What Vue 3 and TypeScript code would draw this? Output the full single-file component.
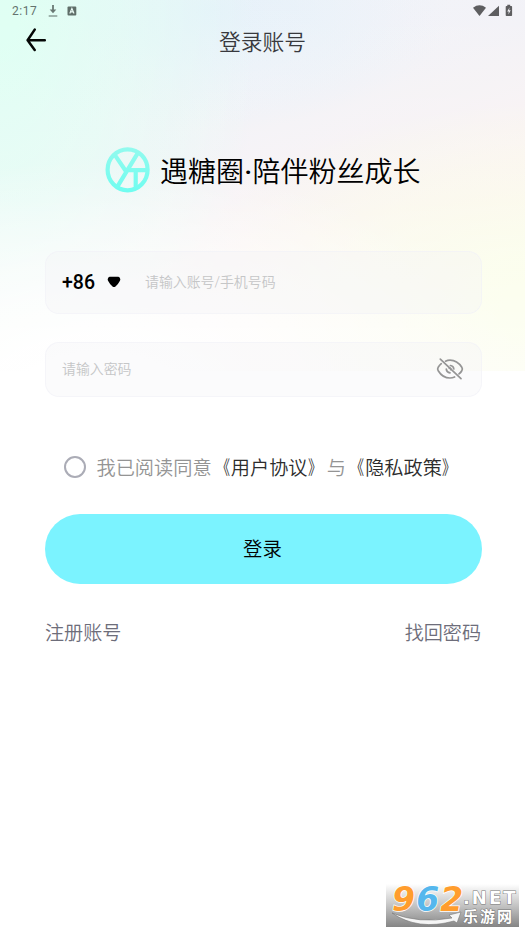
<script setup lang="ts">
import { ref } from 'vue'

const account = ref('')
const password = ref('')
const agreed = ref(false)
const masked = ref(true)
</script>

<template>
  <main class="screen">
    <div class="status">
      <span class="time">2:17</span>
      <svg class="download" width="10" height="14" viewBox="0 0 10 14">
        <path d="M5 1v6" stroke="#697873" stroke-width="1.8" />
        <path d="M1.7 5.6h6.6L5 9.2z" fill="#697873" />
        <path d="M.7 12h8.6" stroke="#697873" stroke-width="1.1" />
      </svg>
      <svg class="badge" width="10" height="10" viewBox="0 0 10 10">
        <rect x=".5" y=".5" width="8.8" height="9" rx="1" fill="#5f6e69" />
        <path d="M2.8 7.5 4.9 2.4 7 7.5M3.6 5.9h2.6" fill="none" stroke="#effffa" stroke-width="1.1" />
      </svg>
      <div class="signals">
        <svg width="40" height="14" viewBox="0 0 40 14">
          <path d="M0 3.7Q6.5-1 13 3.7L6.5 12z" fill="#5e5e60" />
          <path d="M26 1.7V12H15z" fill="#5e5e60" />
          <path d="M34.3.8h2.9v1.1h1.1q.8 0 .8.8v8.5q0 .8-.8.8h-4.8q-.8 0-.8-.8V2.7q0-.8.8-.8h.8z" fill="#5e5e60" />
          <path d="m36.5 3.4-2.3 4h1.6l-.4 3 2.3-4.1h-1.6z" fill="#f3f2f6" />
        </svg>
      </div>
    </div>

    <header class="header">
      <button class="back" type="button" aria-label="返回">
        <svg width="22" height="24" viewBox="0 0 22 24">
          <path d="M9.7 1.6 2.6 12.2l7.1 9.7M2.6 12.2h17.2" fill="none" stroke="#050706" stroke-width="2.5" stroke-linecap="round" stroke-linejoin="round" />
        </svg>
      </button>
      <h1>登录账号</h1>
    </header>

    <section class="brand">
      <svg width="46" height="48" viewBox="0 0 46 48">
        <defs>
          <linearGradient id="ring" gradientUnits="userSpaceOnUse" x1="0" y1="2" x2="0" y2="46">
            <stop offset="0" stop-color="#92faee" />
            <stop offset="1" stop-color="#70fdf0" />
          </linearGradient>
        </defs>
        <g fill="none" stroke="url(#ring)" stroke-width="4.2">
          <ellipse cx="22.6" cy="23.8" rx="20" ry="20.5" />
          <path d="M9.6 8.6 20.8 25M32.6 7.3 12.4 40.7M23 24.1h19M30.7 24.8v16.6" />
        </g>
      </svg>
      <span>遇糖圈<i>·</i>陪伴粉丝成长</span>
    </section>

    <form class="form" @submit.prevent>
      <div class="field account">
        <button class="region" type="button">
          <span>+86</span>
          <svg width="14" height="12" viewBox="0 0 14 12">
            <path d="M3 .8h8q1.3 0 2 1.4.8 1.5-.2 2.8-1.5 3.1-4.3 5.5-1.5 1.1-3 0Q2.7 8.1 1.2 5 .2 3.7 1 2.2 1.7.8 3 .8z" fill="#000" />
          </svg>
        </button>
        <input v-model="account" type="text" placeholder="请输入账号/手机号码" />
      </div>
      <div class="field password">
        <input v-model="password" :type="masked ? 'password' : 'text'" placeholder="请输入密码" />
        <button class="eye" type="button" aria-label="密码可见性" @click="masked = !masked">
          <svg width="28" height="24" viewBox="0 0 28 24" fill="none" stroke="#959595" stroke-width="1.7" stroke-linecap="round">
            <path d="M9.5 4.200Q11.600 3.100 14 3.100c4.400 0 9.200 3.100 11.800 7.200q1.100 1.700 0 3.400-1.100 1.900-2.800 3.200M18.600 20Q16.400 21 14 21C9.600 21 4.800 18 2.200 13.700q-1.100-1.700 0-3.400Q3.500 8.200 5.300 6.700" />
            <path d="M14.400 8.500q3.100.4 3.400 3.500M10.300 12.200q.3 3.300 3.700 3.700M4.300 2.200 25 21.700" />
            <path d="M13.200 11.100q1.700-.5 1.500 1.500" />
          </svg>
        </button>
      </div>

      <label class="agreement">
        <input v-model="agreed" type="checkbox" />
        <span>我已阅读同意<b><i class="open">《</i>用户协议<i class="close">》</i></b>与<b><i class="open">《</i>隐私政策<i class="close">》</i></b></span>
      </label>

      <button class="submit" type="submit">登录</button>
      <nav class="links">
        <a>注册账号</a>
        <a>找回密码</a>
      </nav>
    </form>

    <aside class="watermark">
      <svg class="swoosh" width="133" height="43" viewBox="0 0 133 43">
        <path d="M6 29Q32 40 66 34l-3-3 12-3-4 11-3-2Q32 47 6 29z" fill="#f5f5f5" stroke="#777" stroke-width=".6" />
      </svg>
      <span class="digits">9<em>6</em>2</span>
      <div class="words">
        <span class="net">.NET</span>
        <span class="site">乐游网</span>
      </div>
    </aside>
  </main>
</template>

<style>
body {
  background: #fff;
}
</style>

<style scoped>
.screen {
  position: relative;
  box-sizing: border-box;
  width: 525px;
  height: 933px;
  overflow: hidden;
  font-family: Roboto, 'Noto Sans CJK SC', sans-serif;
  font-weight: 350;
  background:
    linear-gradient(180deg, rgba(255, 255, 255, 0.1) 0, rgba(255, 255, 255, 0.2) 200px, rgba(255, 255, 255, 0.6) 371px) 0 0 / 100% 371px no-repeat,
    radial-gradient(ellipse 430px 240px at 100px 400px, #fff 20%, rgba(255, 255, 255, 0) 100%) 0 0 / 100% 371px no-repeat,
    radial-gradient(ellipse 360px 200px at 540px 300px, #fafee4 10%, rgba(250, 254, 228, 0) 100%) 0 0 / 100% 371px no-repeat,
    radial-gradient(ellipse 260px 520px at 0 0, #dcfff2 8%, rgba(228, 255, 247, 0) 100%) 0 0 / 100% 371px no-repeat,
    radial-gradient(ellipse 240px 120px at 210px 10px, #e3f0f9 0, rgba(227, 240, 249, 0) 100%) 0 0 / 100% 371px no-repeat,
    linear-gradient(160deg, #eff5fa 0, #f2f1f6 38%, #faf1f1 62%, #fcf7f0 100%) 0 0 / 100% 371px no-repeat,
    #fff;
}

button {
  padding: 0;
  border: 0;
  background: none;
  font: inherit;
  color: inherit;
}

svg {
  display: block;
  flex: none;
}

.status {
  display: flex;
  align-items: center;
  height: 21px;
  padding: 0 12px;
}

.time {
  width: 36px;
  color: #64736e;
  font-size: 12px;
  font-weight: 400;
  letter-spacing: 0.5px;
}

.badge {
  margin-left: 9px;
}

.signals {
  margin-left: auto;
}

.header {
  display: grid;
  grid-template-columns: 60px 1fr 60px;
  align-items: center;
  height: 41px;
}

.back {
  padding: 0 0 4px 24.5px;
}

h1 {
  margin: 0;
  padding-top: 2px;
  color: #38393d;
  font-size: 21.8px;
  font-weight: 350;
  line-height: 40px;
  text-align: center;
}

.brand {
  display: flex;
  align-items: center;
  gap: 9px;
  height: 48px;
  margin-top: 84px;
  padding-left: 105px;
  color: #000;
  font-size: 28px;
}

.brand i {
  display: inline-block;
  width: 8.5px;
  font-style: normal;
  font-weight: 500;
  text-align: center;
}

.form {
  display: flex;
  flex-direction: column;
  margin: 57px 43px 0 45px;
}

.field {
  box-sizing: border-box;
  display: flex;
  align-items: center;
  width: 437px;
  padding: 0 17px 2px 16px;
  border: 1px solid rgba(240, 240, 246, 0.6);
  border-radius: 14px;
  background: rgba(242, 243, 247, 0.32);
}

.account {
  height: 63px;
}

.password {
  height: 55px;
  margin-top: 28px;
}

.region {
  display: flex;
  align-items: center;
  gap: 12px;
  width: 83px;
  padding-top: 1px;
  color: #000;
  font-size: 19.5px;
  font-weight: 500;
}

.field input {
  flex: 1;
  min-width: 0;
  padding: 0;
  border: 0;
  outline: 0;
  background: transparent;
  font: 350 13.9px Roboto, 'Noto Sans CJK SC', sans-serif;
}

.field input::placeholder {
  color: #c5c6c7;
  opacity: 1;
}

.agreement {
  display: flex;
  align-items: center;
  gap: 10.5px;
  height: 30px;
  margin-top: 55px;
  padding-left: 19px;
  color: #949494;
  font-size: 19.2px;
  white-space: nowrap;
}

.agreement input {
  box-sizing: border-box;
  width: 22px;
  height: 22px;
  margin: 0;
  border: 2px solid #abacb6;
  border-radius: 50%;
  appearance: none;
}

.agreement input:checked {
  background: #7bf3ff;
}

.agreement b {
  color: #2c2c2c;
  font-weight: 350;
}

.agreement i {
  display: inline-block;
  font-style: normal;
}

.open {
  transform: translateX(-1px) scaleX(0.72);
  transform-origin: right;
}

.close {
  transform: scaleX(0.72);
  transform-origin: left;
}

.submit {
  height: 70px;
  margin-top: 32px;
  padding: 0 2px 3px 0;
  border-radius: 35px;
  background: #7bf3ff;
  color: #000;
  font-size: 19.4px;
}

.links {
  display: flex;
  justify-content: space-between;
  margin-top: 35px;
  padding-right: 1px;
  color: #6d6d7a;
  font-size: 19.1px;
  line-height: 30px;
}

.watermark {
  position: absolute;
  right: 6px;
  bottom: 6px;
  display: flex;
  width: 133px;
  height: 43px;
  background: linear-gradient(#fff, #c4c4c4 50%, #858585);
  color: #fff;
  white-space: nowrap;
}

.swoosh {
  position: absolute;
  left: 0;
  top: 0;
}

.digits {
  position: relative;
  width: 71px;
  padding-left: 6px;
  color: #ff9d2e;
  font: italic 700 33px/31px 'DejaVu Sans', sans-serif;
  letter-spacing: 1.2px;
  -webkit-text-stroke: 1.5px #fff;
  paint-order: stroke;
}

.digits em {
  color: #55b7ed;
}

.words {
  position: relative;
  display: flex;
  flex-direction: column;
  padding-top: 5px;
  -webkit-text-stroke: 1px #777;
  paint-order: stroke;
}

.net {
  height: 18px;
  font: 700 18px/18px 'DejaVu Sans', sans-serif;
  letter-spacing: 2px;
}

.site {
  height: 18px;
  font: 700 15px/18px 'Noto Sans CJK SC', sans-serif;
  letter-spacing: 2px;
}
</style>
